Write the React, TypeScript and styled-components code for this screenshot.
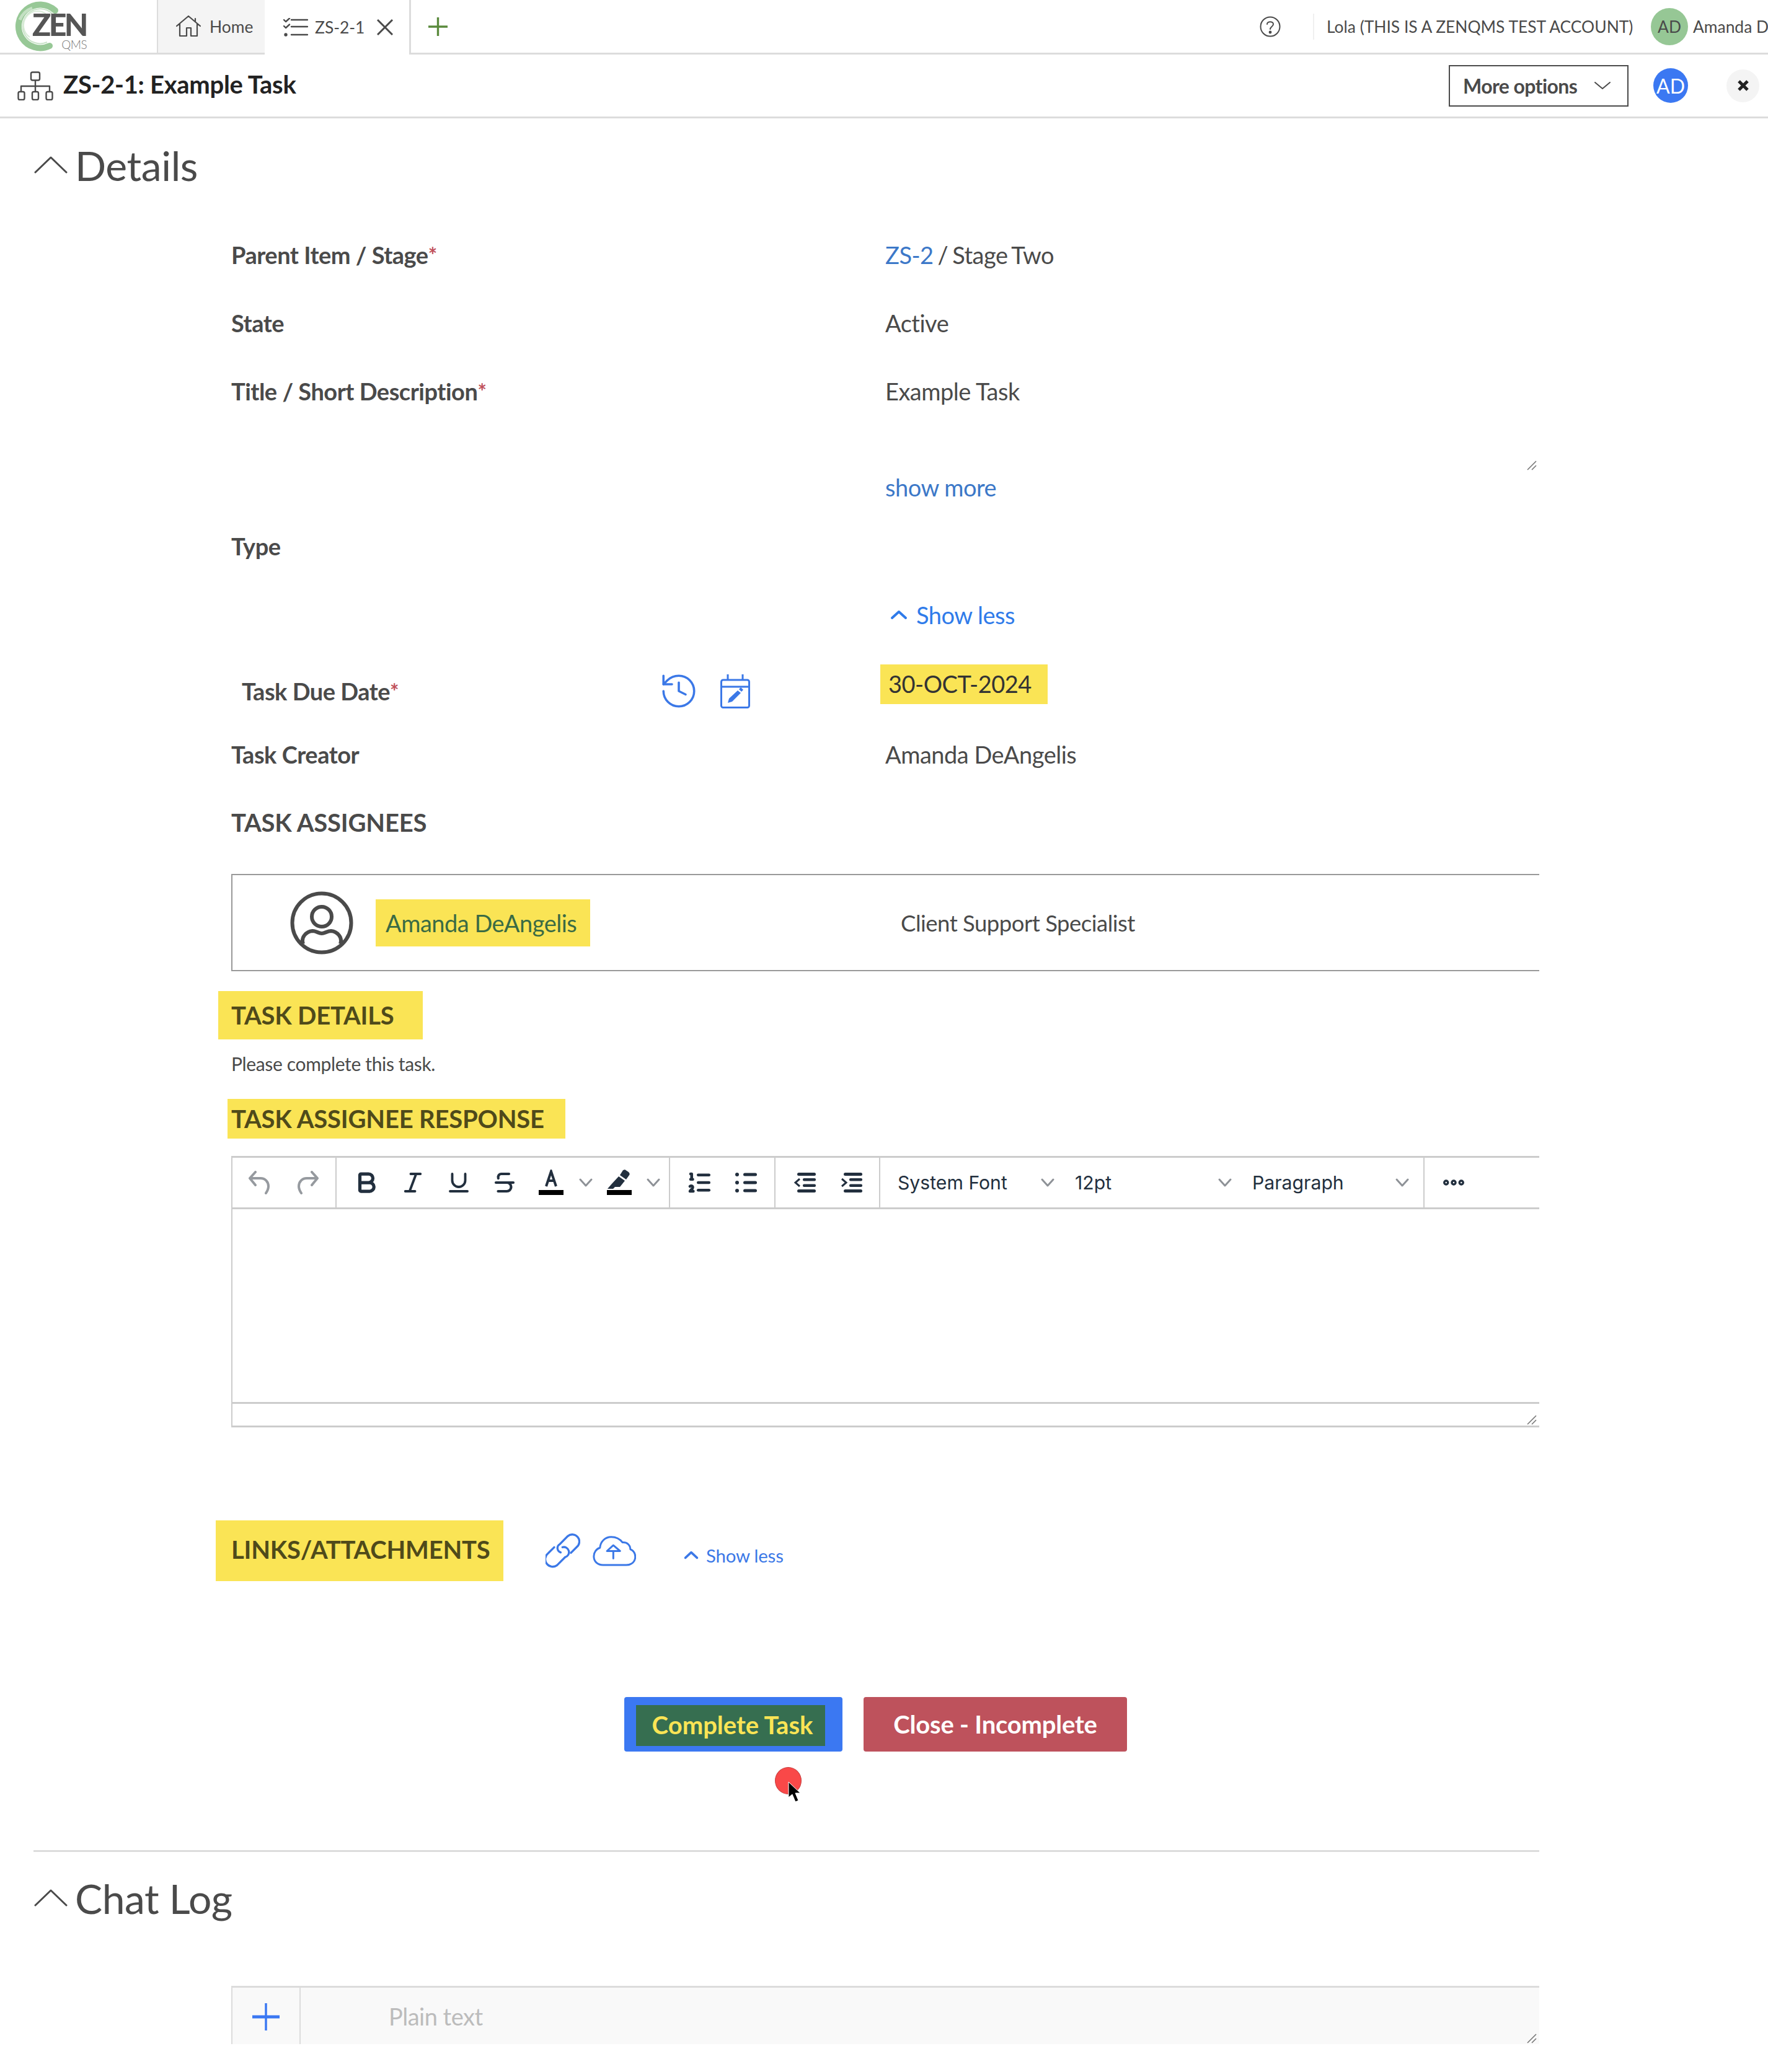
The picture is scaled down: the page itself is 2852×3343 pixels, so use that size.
import React from 'react';
import styled, { createGlobalStyle } from 'styled-components';
import { History, Bold, Italic, Underline, Strikethrough, ListOrdered, Ellipsis } from 'lucide-react';

const Global = createGlobalStyle`
  html, body { margin: 0; padding: 0; background: #fff; }
  * { box-sizing: border-box; }
  body { font-family: Lato, "Liberation Sans", sans-serif; color: #4a4a4a; }
`;

const Page = styled.div`
  width: 2852px;
  height: 3343px;
  overflow: hidden;
  background: #fff;
`;

const TopBar = styled.header`
  display: flex;
  align-items: stretch;
  height: 88px;
  font-size: 26.4px;
`;
const LogoCell = styled.div`
  width: 253px;
  border-bottom: 3px solid #dcdcdc;
  padding: 2px 0 0 24px;
`;
const LogoMark = styled.div`
  position: relative;
  width: 116px;
  height: 82px;
`;
const LogoZen = styled.span`
  position: absolute;
  left: 28px;
  top: 16px;
  font-size: 50px;
  line-height: 42px;
  font-weight: 900;
  letter-spacing: -3.6px;
  color: #555;
`;
const LogoQms = styled.span`
  position: absolute;
  right: 0;
  top: 59px;
  font-size: 19px;
  line-height: 22px;
  font-weight: 300;
  letter-spacing: -0.6px;
  color: #777;
`;
const HomeTab = styled.div`
  width: 174px;
  display: flex;
  align-items: center;
  gap: 14px;
  padding-left: 29px;
  background: #f4f4f4;
  border-left: 2px solid #dcdcdc;
  border-bottom: 3px solid #dcdcdc;
`;
const ActiveTab = styled.div`
  width: 236px;
  display: flex;
  align-items: center;
  padding-left: 30px;
  border-right: 3px solid #dcdcdc;
  gap: 11px;
`;
const TabClose = styled.span`
  display: flex;
  margin-left: 9px;
`;
const TopRest = styled.div`
  flex: 1;
  display: flex;
  align-items: center;
  border-bottom: 3px solid #dcdcdc;
  padding-left: 28px;
  white-space: nowrap;
  overflow: hidden;
  & > * {
    flex: none;
  }
`;
const HelpCell = styled.div`
  display: flex;
  align-items: center;
  margin-left: 1310px;
  height: 42px;
  padding-right: 52px;
  border-right: 2px solid #f0f0f0;
`;
const AccountName = styled.span`
  margin-left: 20px;
  width: 523px;
`;
const UserBadge = styled.span`
  width: 60px;
  height: 60px;
  margin-right: 8px;
  border-radius: 50%;
  background: #96c795;
  display: flex;
  align-items: center;
  justify-content: center;
`;

const SubBar = styled.div`
  display: flex;
  align-items: center;
  height: 103px;
  border-bottom: 3px solid #dcdcdc;
  padding: 0 14px 0 28px;
`;
const PageTitle = styled.h1`
  margin: 0 0 0 16px;
  font-size: 40px;
  font-weight: 700;
  letter-spacing: -0.3px;
  color: #222;
  flex: 1;
  position: relative;
  top: -2px;
`;
const MoreOptions = styled.div`
  width: 290px;
  height: 67px;
  display: flex;
  align-items: center;
  justify-content: space-between;
  border: 2px solid #4a4a4a;
  padding: 0 26px 0 21px;
  font-size: 32px;
  font-weight: 700;
  letter-spacing: -0.6px;
  margin-right: 40px;
`;
const BlueBadge = styled.span`
  width: 56px;
  height: 56px;
  border-radius: 50%;
  background: #3b78f2;
  color: #fff;
  font-size: 32px;
  display: flex;
  align-items: center;
  justify-content: center;
  margin-right: 62px;
`;
const CloseCircle = styled.span`
  width: 53px;
  height: 53px;
  border-radius: 50%;
  background: #f4f4f4;
  display: flex;
  align-items: center;
  justify-content: center;
`;

const Main = styled.main`
  width: 2483px;
  padding-left: 54px;
`;
const SectionHeader = styled.div<{ $h: number; $mb?: number }>`
  display: flex;
  align-items: center;
  height: ${(p) => p.$h}px;
  margin-bottom: ${(p) => p.$mb || 0}px;
  gap: 11px;
`;
const SectionTitle = styled.h2`
  margin: 0;
  font-size: 66px;
  font-weight: 400;
  letter-spacing: -0.4px;
  color: #4a4a4a;
`;
const Indented = styled.div`
  margin-left: 319px;
`;
const Row = styled.div<{ $h: number; $pt?: number }>`
  display: grid;
  grid-template-columns: 1055px 1fr;
  align-items: center;
  height: ${(p) => p.$h}px;
  padding-top: ${(p) => p.$pt || 0}px;
  font-size: 38px;
  letter-spacing: -0.5px;
`;
const Label = styled.div<{ $inset?: number }>`
  font-weight: 700;
  padding-left: ${(p) => p.$inset || 0}px;
  display: flex;
  align-items: center;
`;
const CapsLabel = styled.div`
  font-size: 40px;
  font-weight: 700;
  letter-spacing: -0.2px;
`;
const Star = styled.sup`
  color: #c0505a;
  font-size: 34px;
  line-height: 0;
`;
const DueIcons = styled.span`
  display: flex;
  align-items: center;
  gap: 34px;
  margin-left: 419px;
`;
const Link = styled.a`
  color: #3c78c8;
`;
const ParentValue = styled.div`
  word-spacing: -2.3px;
`;
const GripRow = styled.div<{ $h: number }>`
  display: flex;
  justify-content: flex-end;
  align-items: flex-end;
  height: ${(p) => p.$h}px;
  padding-right: 3px;
`;
const ShowLess = styled.span`
  display: flex;
  align-items: center;
  gap: 13px;
  color: #2f7bea;
  margin-left: 7px;
`;
const HighlightDate = styled.span`
  display: inline-block;
  background: #fae455;
  color: #333;
  width: 270px;
  height: 64px;
  line-height: 63px;
  padding-left: 13px;
  margin-left: -8px;
  position: relative;
  top: -11px;
`;
const AssigneeBox = styled.div`
  display: flex;
  align-items: center;
  height: 157px;
  border: 2px solid #999;
  border-right: none;
  padding-left: 93px;
  font-size: 38px;
  letter-spacing: -0.5px;
`;
const AssigneeName = styled.span`
  margin-left: 36px;
  width: 346px;
  height: 76px;
  line-height: 76px;
  padding-left: 16px;
  background: #fae455;
  color: #3a6b44;
`;
const AssigneeRole = styled.span`
  margin-left: 501px;
  font-size: 36.5px;
`;
const HighlightHeading = styled.div<{ $w: number; $h: number; $mt: number; $pl: number; $pb?: number }>`
  width: ${(p) => p.$w}px;
  height: ${(p) => p.$h}px;
  margin-top: ${(p) => p.$mt}px;
  margin-left: -${(p) => p.$pl}px;
  padding-left: ${(p) => p.$pl}px;
  padding-bottom: ${(p) => p.$pb || 0}px;
  background: #fae455;
  display: flex;
  align-items: center;
  font-size: 40px;
  font-weight: 700;
  letter-spacing: -0.2px;
  color: #4f4a1a;
  white-space: nowrap;
`;
const Note = styled.div`
  height: 78px;
  display: flex;
  align-items: center;
  font-size: 30px;
  letter-spacing: -0.35px;
`;
const Editor = styled.div`
  margin-top: 28px;
  border-left: 2px solid #ccc;
`;
const Toolbar = styled.div`
  display: flex;
  height: 86px;
  border-top: 3px solid #ccc;
  border-bottom: 3px solid #ccc;
`;
const ToolGroup = styled.div<{ $w?: number; $pl: number }>`
  display: flex;
  align-items: center;
  flex: ${(p) => (p.$w ? 'none' : 1)};
  width: ${(p) => (p.$w ? `${p.$w}px` : 'auto')};
  padding-left: ${(p) => p.$pl}px;
  border-right: ${(p) => (p.$w ? '2px solid #ccc' : 'none')};
`;
const ToolButton = styled.span<{ $w: number; $c?: string }>`
  flex: none;
  width: ${(p) => p.$w}px;
  display: flex;
  justify-content: center;
  align-items: center;
  color: ${(p) => p.$c || '#222f3e'};
`;
const ToolSelect = styled.span`
  flex: none;
  width: 286px;
  padding: 0 4px 0 28px;
  display: flex;
  justify-content: space-between;
  align-items: center;
  font-family: Inter, Roboto, sans-serif;
  font-size: 30.2px;
  color: #222f3e;
`;
const EditorBody = styled.div`
  height: 311px;
`;
const EditorStatus = styled.div`
  height: 41px;
  border-top: 3px solid #ccc;
  border-bottom: 3px solid #ccc;
  display: flex;
  justify-content: flex-end;
  align-items: flex-end;
  padding-right: 3px;
`;
const LinksBar = styled.div`
  display: flex;
  align-items: center;
  margin-top: 150px;
`;
const LinkIcons = styled.div`
  display: flex;
  align-items: center;
  gap: 20px;
  margin-left: 68px;
`;
const SmallShowLess = styled.span`
  display: flex;
  align-items: center;
  gap: 11px;
  margin: 14px 0 0 76px;
  color: #3b78e7;
  font-size: 29.4px;
  letter-spacing: -0.2px;
`;
const ButtonRow = styled.div`
  position: relative;
  display: flex;
  gap: 34px;
  margin: 187px 0 0 953px;
  height: 88px;
`;
const PrimaryButton = styled.button`
  width: 352px;
  height: 88px;
  border: none;
  border-radius: 4px;
  background: #3b78f2;
  padding: 13px 28px 9px 19px;
  font: inherit;
`;
const PrimaryInner = styled.span`
  display: flex;
  align-items: center;
  justify-content: center;
  height: 66px;
  padding: 0 0 3px 6px;
  background: #366e50;
  color: #fae455;
  font-size: 40px;
  font-weight: 700;
`;
const DangerButton = styled.button`
  width: 425px;
  height: 88px;
  border: none;
  border-radius: 4px;
  background: #be525c;
  color: #fff;
  font-family: inherit;
  font-size: 40px;
  font-weight: 700;
  letter-spacing: -0.2px;
`;
const ClickMarker = styled.span`
  position: absolute;
  left: 243px;
  top: 113px;
  width: 43px;
  height: 44px;
  border-radius: 50%;
  background: #f94848;
  border: 1px solid #c84040;
`;
const Pointer = styled.svg`
  position: absolute;
  left: 264px;
  top: 136px;
`;
const Divider = styled.hr`
  margin: 159px 0 0;
  border: none;
  border-top: 3px solid #dcdcdc;
`;
const ChatBox = styled.div`
  margin-top: 68px;
  height: 94px;
  background: #f9f9f9;
  border-top: 3px solid #dcdcdc;
  border-left: 2px solid #dcdcdc;
  display: flex;
  overflow: hidden;
`;
const ChatAdd = styled.span`
  width: 110px;
  padding-top: 2px;
  border-right: 2px solid #dcdcdc;
  display: flex;
  align-items: center;
  justify-content: center;
`;
const ChatInput = styled.div`
  flex: 1;
  display: flex;
  justify-content: space-between;
  align-items: flex-end;
  padding: 0 3px 0 142px;
`;
const Placeholder = styled.span`
  align-self: center;
  color: #bcbcbc;
  font-size: 38px;
  letter-spacing: -0.5px;
`;

const Chevron = ({ w = 24, h = 14, c = '#4a4a4a', sw = 2.5, up = false }: { w?: number; h?: number; c?: string; sw?: number; up?: boolean }) => (
  <svg width={w} height={h} viewBox={`0 0 ${w} ${h}`} fill="none" stroke={c} strokeWidth={sw} strokeLinecap="round" strokeLinejoin="round">
    {up ? (
      <path d={`M${sw} ${h - sw} L${w / 2} ${sw} L${w - sw} ${h - sw}`} />
    ) : (
      <path d={`M${sw} ${sw} L${w / 2} ${h - sw} L${w - sw} ${sw}`} />
    )}
  </svg>
);

const Grip = () => (
  <svg width="18" height="18" viewBox="0 0 18 18" stroke="#777" strokeWidth="1.6">
    <path d="M2 16 L16 2 M9 16 L16 9" />
  </svg>
);

const LogoRing = () => (
  <svg width="86" height="82" viewBox="0 0 86 82" fill="none" style={{ position: 'absolute', left: 0, top: 0 }}>
    <path d="M65 15 A35 35 0 1 0 56 72" stroke="#97c896" strokeWidth="10" strokeLinecap="round" />
    <path d="M8 30 A33 33 0 0 1 28 11" stroke="#c4e0c3" strokeWidth="5" />
    <path d="M60 20 A28 28 0 1 0 52 66" stroke="#c9e3c8" strokeWidth="2" />
    <path d="M50 20 A22 22 0 0 0 24 58" stroke="#d9ecd8" strokeWidth="2" />
  </svg>
);

const HomeIcon = () => (
  <svg width="40" height="35" viewBox="0 0 40 35" fill="none" stroke="#4a4a4a" strokeWidth="2.2" strokeLinejoin="round" strokeLinecap="round">
    <path d="M1 17 L20 1 L39 17 M6 14 V33 H17 V20 H24 V33 H34 V14 M31 5 V10" />
  </svg>
);
const TaskListIcon = () => (
  <svg width="40" height="30" viewBox="0 0 40 30" fill="none" stroke="#4a4a4a" strokeWidth="2.4" strokeLinecap="round" strokeLinejoin="round">
    <path d="M1 3 L4 6 L10 0.5 M1 13 L4 16 L10 10.5 M13 3 H39 M13 14 H39 M13 27 H39" />
    <circle cx="4" cy="27" r="1.5" fill="#4a4a4a" />
  </svg>
);
const OrgIcon = () => (
  <svg width="58" height="47" viewBox="0 0 58 47" fill="none" stroke="#4a4a4a" strokeWidth="2.4" strokeLinejoin="round">
    <rect x="22" y="1.5" width="14" height="13" rx="2.5" />
    <path d="M29 14.5 V33 M6 33 V24 H52 V33" />
    <rect x="1.5" y="33" width="10" height="13" rx="2.5" />
    <rect x="24" y="33" width="10" height="13" rx="2.5" />
    <rect x="46.5" y="33" width="10" height="13" rx="2.5" />
  </svg>
);
const CalendarEdit = () => (
  <svg width="48" height="55" viewBox="0 0 48 55" fill="none" stroke="#3b78e7" strokeWidth="3" strokeLinejoin="round">
    <rect x="1.5" y="9" width="45" height="44.5" rx="3" />
    <path d="M1.5 20 H46.5 M12 0 V9 M36 0 V9" />
    <path d="M12 46 L14 39 L28 26 L33 30 L19 44 Z" fill="#3b78e7" stroke="none" />
    <path d="M30 24 L33 21 L37 25 L34 28 Z" fill="#3b78e7" stroke="none" />
  </svg>
);
const PersonIcon = () => (
  <svg width="102" height="102" viewBox="0 0 102 102" fill="none" stroke="#4a4a4a" strokeWidth="6">
    <circle cx="51" cy="51" r="47.5" />
    <circle cx="51" cy="41" r="16" />
    <path d="M21 85 C17 74 26 65 36 64 C42 64 46 68 51 68 C56 68 60 64 66 64 C76 65 85 74 81 85" />
  </svg>
);
const LinkIcon = () => (
  <svg width="56" height="56" viewBox="30 33 168 168" fill="none" stroke="#3b78e7" strokeWidth="10" strokeLinecap="round">
    <path d="M153 127 L181 99 A30 30 0 0 0 138 46 L99 85 A22 22 0 0 0 103 125" />
    <path d="M72 100 L43 129 A30 30 0 0 0 86 187 L125 148 A22 22 0 0 0 112 100" />
  </svg>
);
const CloudIcon = () => (
  <svg width="70" height="49" viewBox="255 40 210 148" fill="none" stroke="#3b78e7" strokeWidth="9" strokeLinejoin="round" strokeLinecap="round">
    <path d="M305 182 H418 C445 182 462 165 462 142 C462 122 450 110 438 105 C438 85 422 70 400 72 C385 52 365 45 345 45 C315 45 292 68 290 98 C272 103 260 120 260 140 C260 165 278 182 305 182 Z" />
    <path d="M355 86 L324 114 H388 Z M355 114 V150" />
  </svg>
);
const UndoIcon = ({ flip }: { flip?: boolean }) => (
  <svg width="36" height="38" viewBox="0 0 36 38" fill="none" stroke="#969a9f" strokeWidth="4" strokeLinecap="round" strokeLinejoin="round" style={flip ? { transform: 'scaleX(-1)' } : undefined}>
    <path d="M12 2 L3 12 L12 23 M3 12 H20 C28 12 33 18 33 25 C33 30 31 33 29 36" />
  </svg>
);
const TextColorIcon = () => (
  <svg width="42" height="42" viewBox="0 0 42 42">
    <path d="M13 27 L21 3 L29 27 M16 18 H26" fill="none" stroke="#222f3e" strokeWidth="4" />
    <rect x="1" y="33" width="40" height="8" fill="#000" />
  </svg>
);
const HighlightIcon = () => (
  <svg width="42" height="42" viewBox="0 0 42 42">
    <path d="M30 0 L36 4 C38 6 38 8 37 9 L32 16 L22 9 L27 1 Z M20 11 L30 18 L22 28 L14 28 L11 31 L2 31 L8 24 Z" fill="#222f3e" />
    <rect x="1" y="33" width="40" height="8" fill="#000" />
  </svg>
);
const BulletIcon = () => (
  <svg width="36" height="34" viewBox="0 0 36 34" fill="#222f3e">
    <circle cx="3" cy="4" r="3" /><circle cx="3" cy="17" r="3" /><circle cx="3" cy="30" r="3" />
    <rect x="13" y="1.5" width="22" height="5" rx="2.5" /><rect x="13" y="14.5" width="22" height="5" rx="2.5" /><rect x="13" y="27.5" width="22" height="5" rx="2.5" />
  </svg>
);
const IndentIcon = ({ out }: { out?: boolean }) => (
  <svg width="36" height="34" viewBox="0 0 36 34" fill="#222f3e">
    <rect x="5" y="1" width="30" height="5" rx="2.5" /><rect x="14" y="10" width="21" height="4.5" rx="2" /><rect x="14" y="19.5" width="21" height="4.5" rx="2" /><rect x="5" y="28" width="30" height="5" rx="2.5" />
    <path d={out ? 'M9 11 L2 17 L9 23' : 'M2 11 L9 17 L2 23'} fill="none" stroke="#222f3e" strokeWidth="3" />
  </svg>
);

export default function App() {
  return (
    <Page>
      <Global />
      <TopBar>
        <LogoCell>
          <LogoMark>
            <LogoRing />
            <LogoZen>ZEN</LogoZen>
            <LogoQms>QMS</LogoQms>
          </LogoMark>
        </LogoCell>
        <HomeTab>
          <HomeIcon />
          <span>Home</span>
        </HomeTab>
        <ActiveTab>
          <TaskListIcon />
          <span>ZS-2-1</span>
          <TabClose>
            <svg width="26" height="26" viewBox="0 0 26 26" stroke="#4a4a4a" strokeWidth="3"><path d="M1 1 L25 25 M25 1 L1 25" /></svg>
          </TabClose>
        </ActiveTab>
        <TopRest>
          <svg width="31" height="30" viewBox="0 0 31 30" stroke="#5a8a3c" strokeWidth="3.4"><path d="M15.5 0 V30 M0 15 H31" /></svg>
          <HelpCell>
            <svg width="34" height="34" viewBox="0 0 34 34" fill="none" stroke="#4a4a4a" strokeWidth="2">
              <circle cx="17" cy="17" r="15.5" />
              <path d="M12 13 C12 8 22 8 22 13 C22 17 17 17 17 21" strokeLinecap="round" />
              <circle cx="17" cy="26" r="1.4" fill="#4a4a4a" />
            </svg>
          </HelpCell>
          <AccountName>Lola (THIS IS A ZENQMS TEST ACCOUNT)</AccountName>
          <UserBadge>AD</UserBadge>
          <span>Amanda DeAngelis</span>
        </TopRest>
      </TopBar>
      <SubBar>
        <OrgIcon />
        <PageTitle>ZS-2-1: Example Task</PageTitle>
        <MoreOptions>
          More options
          <Chevron w={28} h={14} sw={2} />
        </MoreOptions>
        <BlueBadge>AD</BlueBadge>
        <CloseCircle>
          <svg width="20" height="20" viewBox="0 0 20 20" stroke="#222" strokeWidth="5"><path d="M3 3 L17 17 M17 3 L3 17" /></svg>
        </CloseCircle>
      </SubBar>
      <Main>
        <SectionHeader $h={150} $mb={14}>
          <Chevron w={56} h={30} sw={3} up />
          <SectionTitle>Details</SectionTitle>
        </SectionHeader>
        <Indented>
          <Row $h={111}>
            <Label>Parent Item / Stage<Star>*</Star></Label>
            <ParentValue><Link>ZS-2</Link> / Stage Two</ParentValue>
          </Row>
          <Row $h={109}>
            <Label>State</Label>
            <div>Active</div>
          </Row>
          <Row $h={111}>
            <Label>Title / Short Description<Star>*</Star></Label>
            <div>Example Task</div>
          </Row>
          <GripRow $h={74}><Grip /></GripRow>
          <Row $h={52}>
            <span />
            <Link>show more</Link>
          </Row>
          <Row $h={138}>
            <Label>Type</Label>
            <span />
          </Row>
          <Row $h={84}>
            <span />
            <ShowLess>
              <Chevron w={30} h={18} c="#2f7bea" sw={4} up />
              Show less
            </ShowLess>
          </Row>
          <Row $h={160} $pt={2}>
            <Label $inset={17}>
              Task Due Date<Star>*</Star>
              <DueIcons>
                <History size={66} color="#3b78e7" strokeWidth={1.3} />
                <CalendarEdit />
              </DueIcons>
            </Label>
            <div><HighlightDate>30-OCT-2024</HighlightDate></div>
          </Row>
          <Row $h={42}>
            <Label>Task Creator</Label>
            <div>Amanda DeAngelis</div>
          </Row>
          <Row $h={174} $pt={8}>
            <CapsLabel>TASK ASSIGNEES</CapsLabel>
            <span />
          </Row>
          <AssigneeBox>
            <PersonIcon />
            <AssigneeName>Amanda DeAngelis</AssigneeName>
            <AssigneeRole>Client Support Specialist</AssigneeRole>
          </AssigneeBox>
          <HighlightHeading $w={330} $h={78} $mt={32} $pl={21}>TASK DETAILS</HighlightHeading>
          <Note>Please complete this task.</Note>
          <HighlightHeading $w={545} $h={64} $mt={18} $pl={6}>TASK ASSIGNEE RESPONSE</HighlightHeading>
          <Editor>
            <Toolbar>
              <ToolGroup $w={168} $pl={4}>
                <ToolButton $w={78} $c="#969a9f"><UndoIcon /></ToolButton>
                <ToolButton $w={80} $c="#969a9f"><UndoIcon flip /></ToolButton>
              </ToolGroup>
              <ToolGroup $w={538} $pl={11}>
                <ToolButton $w={74}><Bold size={42} strokeWidth={3} /></ToolButton>
                <ToolButton $w={75}><Italic size={42} strokeWidth={2.2} /></ToolButton>
                <ToolButton $w={74}><Underline size={42} strokeWidth={2.2} /></ToolButton>
                <ToolButton $w={74}><Strikethrough size={42} strokeWidth={2.4} /></ToolButton>
                <ToolButton $w={75}><TextColorIcon /></ToolButton>
                <ToolButton $w={38}><Chevron w={24} h={16} c="#8e9297" sw={3} /></ToolButton>
                <ToolButton $w={70}><HighlightIcon /></ToolButton>
                <ToolButton $w={40}><Chevron w={24} h={16} c="#8e9297" sw={3} /></ToolButton>
              </ToolGroup>
              <ToolGroup $w={170} $pl={9}>
                <ToolButton $w={76}><ListOrdered size={42} strokeWidth={2.6} /></ToolButton>
                <ToolButton $w={76}><BulletIcon /></ToolButton>
              </ToolGroup>
              <ToolGroup $w={169} $pl={11}>
                <ToolButton $w={74}><IndentIcon out /></ToolButton>
                <ToolButton $w={75}><IndentIcon /></ToolButton>
              </ToolGroup>
              <ToolGroup $w={878} $pl={0}>
                <ToolSelect>System Font<Chevron w={24} h={16} c="#8e9297" sw={3} /></ToolSelect>
                <ToolSelect>12pt<Chevron w={24} h={16} c="#8e9297" sw={3} /></ToolSelect>
                <ToolSelect>Paragraph<Chevron w={24} h={16} c="#8e9297" sw={3} /></ToolSelect>
              </ToolGroup>
              <ToolGroup $pl={26}>
                <Ellipsis size={42} strokeWidth={3.4} color="#222f3e" />
              </ToolGroup>
            </Toolbar>
            <EditorBody />
            <EditorStatus><Grip /></EditorStatus>
          </Editor>
          <LinksBar>
            <HighlightHeading $w={464} $h={98} $mt={0} $pl={25} $pb={4}>LINKS/ATTACHMENTS</HighlightHeading>
            <LinkIcons>
              <LinkIcon />
              <CloudIcon />
            </LinkIcons>
            <SmallShowLess>
              <Chevron w={26} h={16} c="#3b78e7" sw={3.6} up />
              Show less
            </SmallShowLess>
          </LinksBar>
        </Indented>
        <ButtonRow>
          <PrimaryButton><PrimaryInner>Complete Task</PrimaryInner></PrimaryButton>
          <DangerButton>Close - Incomplete</DangerButton>
          <ClickMarker />
          <Pointer width="22" height="36" viewBox="0 0 22 36">
            <path d="M1 1 L1 26 L7 21 L12 33 L17 31 L12 19 L20 19 Z" fill="#000" stroke="#fff" strokeWidth="1" />
          </Pointer>
        </ButtonRow>
        <Divider />
        <SectionHeader $h={148}>
          <Chevron w={56} h={30} sw={3} up />
          <SectionTitle>Chat Log</SectionTitle>
        </SectionHeader>
        <Indented>
          <ChatBox>
            <ChatAdd>
              <svg width="44" height="44" viewBox="0 0 44 44" stroke="#3b78f2"><path d="M22 0 V44" strokeWidth="3.5" /><path d="M0 22 H44" strokeWidth="5" /></svg>
            </ChatAdd>
            <ChatInput>
              <Placeholder>Plain text</Placeholder>
              <Grip />
            </ChatInput>
          </ChatBox>
        </Indented>
      </Main>
    </Page>
  );
}
